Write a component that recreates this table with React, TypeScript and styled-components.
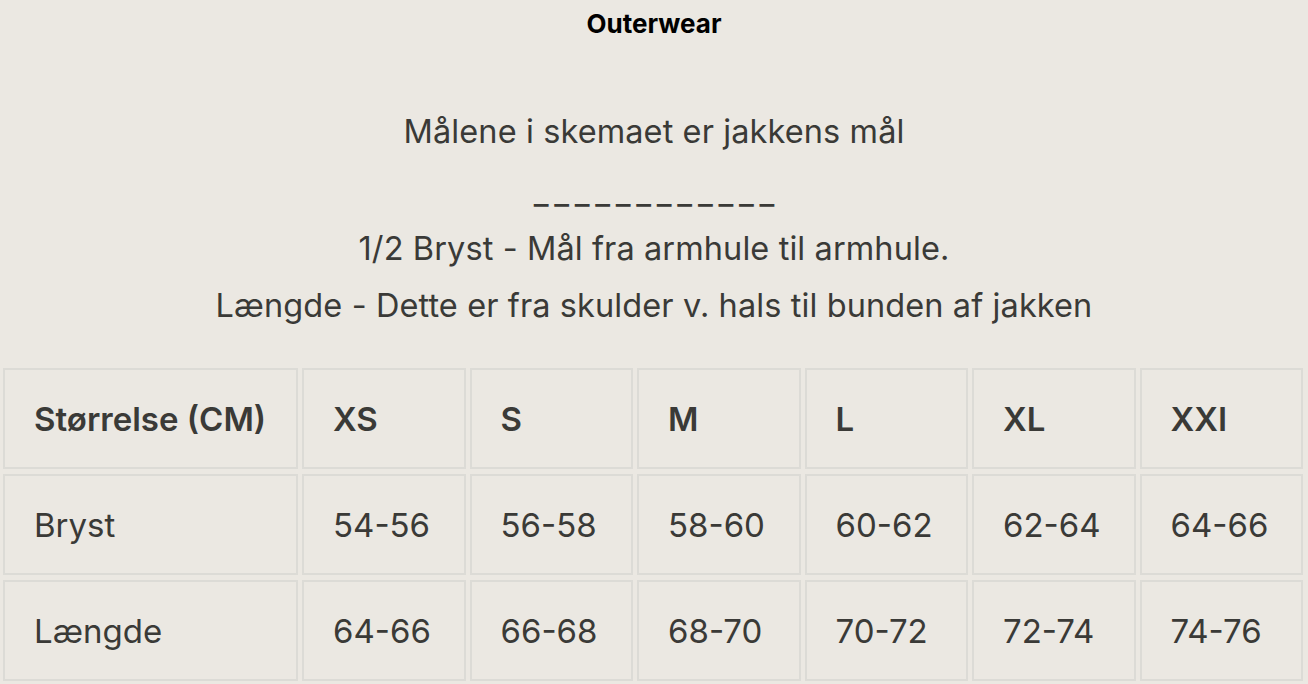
import styled, { createGlobalStyle } from "styled-components";

const GlobalStyle = createGlobalStyle`
    html, body {
        margin: 0;
        padding: 0;
        background: #ebe8e2;
    }
    body {
        font-family: Inter, "Liberation Sans", sans-serif;
        color: #3a3a37;
    }
`;

const Page = styled.div`
    width: 1308px;
    height: 684px;
    overflow: hidden;
    background: #ebe8e2;
`;

const Title = styled.h2`
    margin: 0;
    padding-top: 9px;
    text-align: center;
    font-size: 26px;
    font-weight: 700;
    color: #000;
    line-height: 30px;
`;

const Intro = styled.div`
    margin-top: 64px;
    text-align: center;
    font-size: 32.5px;
    line-height: 57px;
    letter-spacing: 0.1px;
`;

const Line = styled.p`
    margin: 0;
`;

const Divider = styled.p`
    margin: 0;
    height: 60px;
    line-height: 50px;
    padding-top: 8px;
    box-sizing: border-box;
    letter-spacing: 5.7px;
    text-indent: 5.7px;
    color: #3a3a37;
`;

const Table = styled.table`
    width: 1308px;
    border-collapse: separate;
    border-spacing: 4px 5px;
    table-layout: fixed;
    margin-top: 29px;
    margin-left: -1px;
`;

const Cell = styled.td<{ $head?: boolean }>`
    box-sizing: border-box;
    height: 101px;
    border: 2px solid #dcdbd6;
    padding: 0 0 0 29px;
    font-size: 33px;
    font-weight: ${(p) => (p.$head ? 600 : 400)};
    color: #3a3a37;
    vertical-align: middle;
`;

const sizes = ["XS", "S", "M", "L", "XL", "XXI"];
const rows = [
    { label: "Bryst", values: ["54-56", "56-58", "58-60", "60-62", "62-64", "64-66"] },
    { label: "Længde", values: ["64-66", "66-68", "68-70", "70-72", "72-74", "74-76"] },
];

function App() {
    return (
        <Page>
            <GlobalStyle />
            <Title>Outerwear</Title>
            <Intro>
                <Line>Målene i skemaet er jakkens mål</Line>
                <Divider>____________</Divider>
                <Line>1/2 Bryst - Mål fra armhule til armhule.</Line>
                <Line>Længde - Dette er fra skulder v. hals til bunden af jakken</Line>
            </Intro>
            <Table>
                <colgroup>
                    <col style={{ width: 295 }} />
                    {sizes.map((s) => (
                        <col key={s} />
                    ))}
                </colgroup>
                <tbody>
                    <tr>
                        <Cell $head>Størrelse (CM)</Cell>
                        {sizes.map((s) => (
                            <Cell $head key={s}>{s}</Cell>
                        ))}
                    </tr>
                    {rows.map((row) => (
                        <tr key={row.label}>
                            <Cell>{row.label}</Cell>
                            {row.values.map((v, i) => (
                                <Cell key={i}>{v}</Cell>
                            ))}
                        </tr>
                    ))}
                </tbody>
            </Table>
        </Page>
    );
}

export default App;
